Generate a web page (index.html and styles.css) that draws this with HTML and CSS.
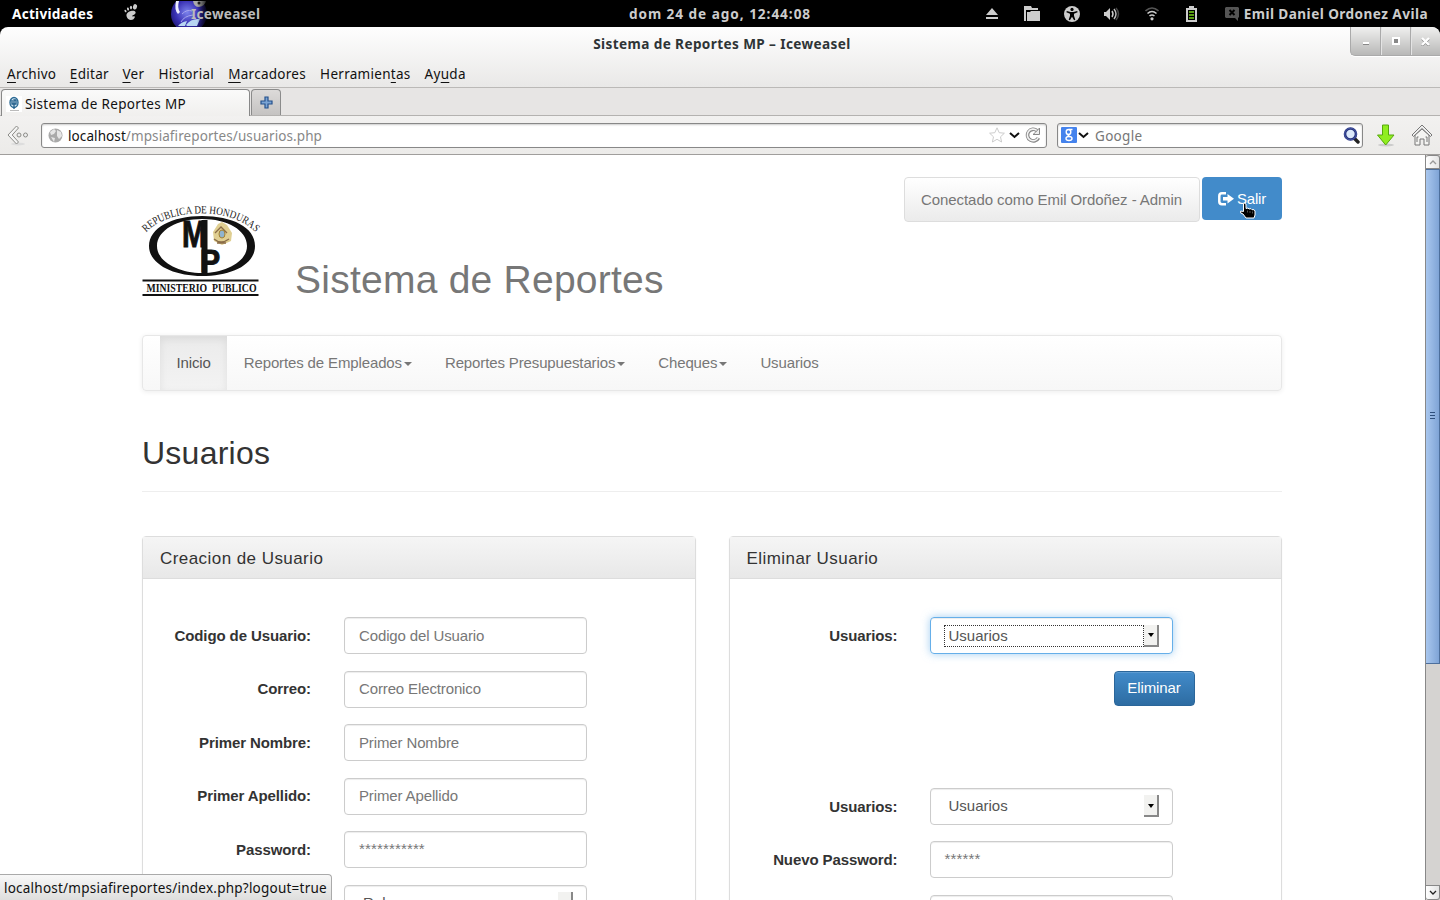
FILE: index.html
```html
<!DOCTYPE html>
<html lang="es">
<head>
<meta charset="utf-8">
<title>Sistema de Reportes MP</title>
<link rel="stylesheet" href="styles.css">
</head>
<body>
<div class="desktop">
  <header class="topbar">
    <span class="activities">Actividades</span>
    <svg class="foot" width="14" height="17" viewBox="0 0 14 17" fill="#ccc"><ellipse cx="11" cy="2.8" rx="2" ry="2.7" transform="rotate(15 11 2.8)"/><ellipse cx="7" cy="3.6" rx="1.1" ry="1.8"/><ellipse cx="4" cy="5" rx="1" ry="1.6" transform="rotate(-15 4 5)"/><ellipse cx="1.5" cy="7" rx=".9" ry="1.4" transform="rotate(-30 1.500 7)"/><path d="M2.500 10.500C3.500 7 10.500 5.500 11.500 8c.8 2.200-2 2.700-3 3.600-.6.800 0 1.200 1 .7 1-.4 1.700.2 1.200 1.300C9.500 16.500 6 16.800 4.200 15c-1.300-1.200-2-3-1.700-4.500z"/></svg>
    <div class="app">
      <svg class="globe" width="38" height="26" viewBox="0 0 38 26"><defs><radialGradient id="gl" cx=".45" cy=".45" r=".6"><stop offset="0" stop-color="#7c83ec"/><stop offset=".55" stop-color="#3931b4"/><stop offset="1" stop-color="#16105f"/></radialGradient><linearGradient id="fade"><stop offset=".5" stop-color="#000" stop-opacity="0"/><stop offset="1" stop-color="#000"/></linearGradient></defs><circle cx="18" cy="13" r="18" fill="url(#gl)"/><path d="M5 0Q3 9 7 13L9 11Q6 7 8 0z" fill="#eef"/><path d="M7 25q3-4 9-5l-2 5zM15 24q5-7 14-6l-3 7H16z" fill="#b8d6f2"/><path d="M11 13q5-5 10-3M10 21q3-6 12-7" stroke="#a6a5ee" fill="none"/><path d="M22 0h13q-1 5-7 6-5 0-6-6z" fill="#aaa"/><circle cx="28" cy="2" r="1.500" fill="#222"/><path d="M14 0h24v26H14z" fill="url(#fade)"/></svg>
      <span>Iceweasel</span>
    </div>
    <span class="clock">dom 24 de ago, 12:44:08</span>
    <div class="tray">
      <svg width="12" height="12" viewBox="0 0 12 12" fill="#ccc"><path d="M6 0l6 7H0zM0 9h12v2H0z"/></svg>
      <svg width="16" height="15" viewBox="0 0 16 15"><path d="M0 0h7l1 2h6v2H2v11H0z" fill="#ccc"/><path d="M3 6h3l1-1h9v10H3z" fill="#ccc"/></svg>
      <svg width="16" height="16" viewBox="0 0 16 16"><circle cx="8" cy="8" r="8" fill="#ccc"/><circle cx="8" cy="3.400" r="1.600"/><path d="M2.800 5l3.700 1h3l3.700-1 .4 1.200L10 7.800v2l1.300 4-1.200.5L8 10.800l-2.100 3.500-1.200-.5 1.300-4v-2L2.400 6.200z"/></svg>
      <svg width="16" height="14" viewBox="0 0 16 14"><path d="M0 5h2l4-4v12L2 9H0z" fill="#ccc"/><path d="M8 4q2 3 0 6" stroke="#ccc" stroke-width="1.500" fill="none"/><path d="M10 2q4 5 0 10" stroke="#bbb" stroke-width="1.500" fill="none"/><path d="M12 1q5 6 0 12" stroke="#444" stroke-width="1.500" fill="none"/></svg>
      <svg width="14" height="14" viewBox="0 0 14 14" fill="none" stroke-width="1.600"><path d="M.5 4q6.500-6 13 0" stroke="#555"/><path d="M2.500 6.500q4.500-4 9 0M4.500 9q2.500-2 5 0" stroke="#ccc"/><circle cx="7" cy="11.800" r="1.600" fill="#ccc"/></svg>
      <svg width="11" height="16" viewBox="0 0 11 16"><path d="M3 0h5v2h3v14H0V2h3z" fill="#ccc"/><path d="M2 4h7v10H2z"/><path d="M3 5h5v2H3zM3 8h5v2H3zM3 11h5v2H3z" fill="#5a9e12"/></svg>
      <svg width="14" height="14" viewBox="0 0 14 14"><path d="M1 0h12l1 1v9l-1 1v3l-3-3H1l-1-1V1z" fill="#555"/><path d="M4.500 3l5 5m0-5l-5 5" stroke="#000" stroke-width="2"/></svg>
      <span class="user">Emil Daniel Ordonez Avila</span>
    </div>
  </header>

  <div class="window">
    <div class="titlebar">
      <span class="title">Sistema de Reportes MP – Iceweasel</span>
      <div class="winbtns">
        <i><svg width="8" height="8"><path d="M1 5h6v2H1z" fill="#fff"/><path d="M1 7h6v1H1z" fill="#888"/></svg></i>
        <i><svg width="8" height="8"><path d="M1 1h6v6H1z" stroke="#fff" stroke-width="2" fill="#888"/></svg></i>
        <i><svg width="9" height="9"><path d="M1 2l7 7M8 2L1 9" stroke="#888" stroke-width="2"/><path d="M1 1l7 7M8 1L1 8" stroke="#fff" stroke-width="2.300"/></svg></i>
      </div>
    </div>
    <nav class="menubar">
      <span><u>A</u>rchivo</span><span><u>E</u>ditar</span><span><u>V</u>er</span><span>Hi<u>s</u>torial</span><span><u>M</u>arcadores</span><span>Herramien<u>t</u>as</span><span>Ay<u>u</u>da</span>
    </nav>
    <div class="tabs">
      <div class="tab">
        <svg width="16" height="16" viewBox="0 0 16 16"><path fill="#fff" d="M0 0h16v16H0z"/><ellipse cx="8" cy="6.500" rx="4" ry="5" fill="#cfe3ee" stroke="#2c6a94" stroke-width="1.400"/><path d="M6 4v4h4V4H8v9" stroke="#235e8a" stroke-width="1.300" fill="none"/><path d="M4 14.500h9" stroke="#bbb"/></svg>
        <span>Sistema de Reportes MP</span>
      </div>
      <div class="newtab"><svg width="13" height="13" viewBox="0 0 13 13"><path d="M5 1h3v4h4v3H8v4H5V8H1V5h4z" fill="#7ba4d4" stroke="#24508c" stroke-width="1.200"/></svg></div>
    </div>
    <div class="toolbar">
      <svg class="back" width="22" height="21" viewBox="0 0 22 21"><ellipse cx="11" cy="19" rx="7" ry="1.500" fill="#ddd"/><path d="M9.500 1L1 10l8.500 9 2-2-6.300-7 6.300-7z" fill="#f5f5f5" stroke="#8c8c88"/><circle cx="12" cy="10" r="2" fill="#eee" stroke="#8c8c88"/><circle cx="18.500" cy="10" r="2" fill="#eee" stroke="#8c8c88"/></svg>
      <div class="url">
        <svg width="15" height="15" viewBox="0 0 15 15"><circle cx="7.500" cy="7.500" r="7" fill="#aaa"/><path d="M2 4l4-3 2 2-2 3-3 1zM9 2l4 2 1 4-3 3-2-3zM3 9l4 1-1 4z" fill="#e6e6e6"/></svg>
        <span class="address">localhost<em>/mpsiafireportes/usuarios.php</em></span>
        <svg class="star" width="16" height="16" viewBox="0 0 16 16"><path d="M8 .8l2.200 4.900 5.200.5-3.900 3.600 1.100 5.200L8 12.300 3.400 15l1.100-5.200L.6 6.200l5.200-.5z" fill="#fff" stroke="#ccc"/></svg>
        <svg class="chev" width="11" height="7"><path d="M1 1l4.500 4L10 1" stroke="#111" stroke-width="2" fill="none"/></svg>
        <svg width="16" height="16" viewBox="0 0 16 16" fill="none"><path d="M12 3.600A5.800 5.800 0 1 0 13.500 10.800" stroke="#888" stroke-width="3.600"/><path d="M12 3.600A5.800 5.800 0 1 0 13.300 10.500" stroke="#f4f4f4" stroke-width="1.600"/><path d="M14.500 1v6.500H8l2.500-2.200z" fill="#eee" stroke="#888"/></svg>
      </div>
      <div class="search">
        <svg width="16" height="16" viewBox="0 0 16 16"><rect width="16" height="16" rx="1" fill="#4583ed"/><g fill="none" stroke="#fff" stroke-width="1.400"><ellipse cx="7.500" cy="5" rx="2.300" ry="2.500"/><path d="M8 2.500h3.500M8 7.500q-2 1 .5 2"/><ellipse cx="8" cy="11.500" rx="3" ry="2"/></g></svg>
        <svg class="chev" width="11" height="7"><path d="M1 1l4.500 4L10 1" stroke="#111" stroke-width="2" fill="none"/></svg>
        <span>Google</span>
        <svg width="17" height="17" viewBox="0 0 17 17"><path d="M11 11l4 4" stroke="#222" stroke-width="3.400" stroke-linecap="round"/><circle cx="7.500" cy="7" r="5.500" fill="#dce9fb" stroke="#26337e" stroke-width="2.600"/><circle cx="7.500" cy="7" r="5.800" fill="none" stroke="#5868b4" stroke-width=".7"/></svg>
      </div>
      <svg class="down" width="20" height="23" viewBox="0 0 20 23"><ellipse cx="10" cy="21" rx="8" ry="1.500" fill="#ccc"/><path d="M6.500 1h6v10h5.500l-8.300 10L1.500 11h5z" fill="#90ee20" stroke="#57a80c"/></svg>
      <svg class="home" width="22" height="22" viewBox="0 0 22 22"><path d="M4 11v10h5v-6h4v6h5V11l-7-6z" fill="#f4f4f2" stroke="#777"/><path d="M11 1L1 11l1.500 1.500L11 4.500l8.500 8L21 11z" fill="#eee" stroke="#777"/><path d="M6 18v-5h1.500m7 0H16v5" stroke="#777" fill="none"/></svg>
    </div>

    <div class="viewport">
      <main class="page">
        <div class="container">
          <div class="masthead">
            <svg class="logo" width="118" height="94" viewBox="0 0 118 94">
              <defs><path id="arc" d="M4 28.500C28 3 90 3 113 28"/></defs>
              <text class="logo-arc"><textPath href="#arc" textLength="119" lengthAdjust="spacingAndGlyphs">REPUBLICA DE HONDURAS</textPath></text>
              <path fill-rule="evenodd" d="M60 12C90 12 113 23 113 42S89 72 60 72 7 60 7 42 30 12 60 12zM60 15C36 15 15 26 15 42S37 69 60 69 105 58 105 42 85 15 60 15z" fill="#111"/>
              <text class="logo-mp" transform="translate(40 42.500) scale(.72 1)" textLength="34" lengthAdjust="spacingAndGlyphs">M</text>
              <path d="M59.500 16h6v55h-6z" fill="#111"/>
              <text class="logo-mp p" transform="translate(58 68) scale(.72 1)" textLength="28" lengthAdjust="spacingAndGlyphs">P</text>
              <path d="M71 28l5-8 4-2 5 3 5 8-1 8-9 4-8-4z" fill="#e0cf92"/><path d="M72 35q7 6 15 0M73 29l6-6 6 6M75 39h9" stroke="#8a6c48" stroke-width="1.300" fill="none"/><ellipse cx="80" cy="30" rx="3" ry="4" fill="#8fb4cf" stroke="#a6812e"/>
              <path d="M.5 76.500h116M.5 91h116" stroke="#111" stroke-width="1.800"/>
              <text class="logo-base" x="4.500" y="88" textLength="110" lengthAdjust="spacingAndGlyphs">MINISTERIO&#160; PUBLICO</text>
            </svg>
            <h1>Sistema de Reportes</h1>
            <div class="session">
              <div class="who">Conectado como Emil Ordoñez - Admin</div>
              <a class="exit"><svg width="16" height="14" viewBox="0 0 16 14"><path d="M8 1.300H4Q1.300 1.300 1.300 4v5.500Q1.300 12.200 4 12.200h4" fill="none" stroke="#fff" stroke-width="2.500"/><path d="M9.500 2L16 6.800 9.500 11.500V8.500H5V5h4.500z" fill="#fff"/></svg>Salir
                <svg class="pointer" width="17" height="17" viewBox="0 0 17 17"><path d="M3.500 2Q4.500.5 6 2v4.500L8 6l1 1 2-.3 1 1h2l1 1.300v4L14 16H6l-3-4-2.300-1V9L3.500 9.500z" stroke="#fff"/><path d="M7.500 8.500v2M10 9v2M12.500 9.500v2" stroke="#777" stroke-width=".7"/></svg>
              </a>
            </div>
          </div>
          <nav class="navbar"><a class="active">Inicio</a><a>Reportes de Empleados<b></b></a><a>Reportes Presupuestarios<b></b></a><a>Cheques<b></b></a><a>Usuarios</a></nav>
          <h2>Usuarios</h2>
          <div class="columns">
            <section class="panel">
              <h3>Creacion de Usuario</h3>
              <div class="form">
                <div class="row"><label>Codigo de Usuario:</label><div class="field">Codigo del Usuario</div></div>
                <div class="row"><label>Correo:</label><div class="field">Correo Electronico</div></div>
                <div class="row"><label>Primer Nombre:</label><div class="field">Primer Nombre</div></div>
                <div class="row"><label>Primer Apellido:</label><div class="field">Primer Apellido</div></div>
                <div class="row"><label>Password:</label><div class="field stars">***********</div></div>
                <div class="row"><label></label><div class="field select"><span>Rol</span><i></i></div></div>
              </div>
            </section>
            <section class="panel right">
              <h3>Eliminar Usuario</h3>
              <div class="form">
                <div class="row"><label>Usuarios:</label><div class="field select focus"><span>Usuarios</span><i></i></div></div>
                <div class="actions"><button>Eliminar</button></div>
                <div class="row"><label>Usuarios:</label><div class="field select"><span>Usuarios</span><i></i></div></div>
                <div class="row"><label>Nuevo Password:</label><div class="field stars">******</div></div>
                <div class="row"><label></label><div class="field"></div></div>
              </div>
            </section>
          </div>
        </div>
      </main>
      <div class="scrollbar">
        <div class="sbtn"><svg width="8" height="5"><path d="M1 4l3-3 3 3" stroke="#999" fill="none" stroke-width="1.300"/></svg></div>
        <div class="thumb"><i></i><i></i><i></i></div>
        <div class="track"></div>
        <div class="sbtn last"><svg width="8" height="5"><path d="M1 1l3 3 3-3" stroke="#222" fill="none" stroke-width="1.300"/></svg></div>
      </div>
      <div class="status">localhost/mpsiafireportes/index.php?logout=true</div>
    </div>
  </div>
</div>
</body>
</html>
```
FILE: styles.css
```css
* { box-sizing: border-box; }
body { margin: 0; background: #000; }
svg { display: block; flex: none; }
.desktop { width: 1440px; height: 900px; overflow: hidden; display: flex; flex-direction: column; background: #000; font: 13.5px "Noto Sans", sans-serif; color: #111; white-space: nowrap; }

.topbar { position: relative; height: 27px; flex: none; display: flex; align-items: center; padding: 0 12px; font-size: 13.6px; font-weight: bold; color: #ccc; letter-spacing: .25px; }
.activities { color: #fff; width: 112px; }
.foot { margin-top: -2px; }
.app { display: flex; align-items: center; height: 26px; margin-left: 33px; }
.globe { margin-right: -18px; align-self: flex-start; }
.app span { position: relative; color: #bbb; }
.clock { position: absolute; left: 0; width: 1440px; text-align: center; letter-spacing: .96px; }
.tray { margin-left: auto; display: grid; grid-template-columns: repeat(7, 40px) auto; align-items: center; justify-items: center; }
.tray .user { margin-left: -8px; letter-spacing: .44px; }

.window { flex: 1; min-height: 0; display: flex; flex-direction: column; border-radius: 8px 8px 0 0; overflow: hidden; background: linear-gradient(#fefefe, #e9e8e7 60px); }
.titlebar { position: relative; height: 34px; flex: none; display: flex; justify-content: center; padding-left: 4px; font-weight: bold; font-size: 13.6px; line-height: 34px; color: #2e3436; letter-spacing: .39px; }
.winbtns { position: absolute; right: 0; top: 0; width: 90px; height: 29px; display: flex; background: linear-gradient(#f0f0ef, #b8b8b7); border: 1px solid #aaa; border-width: 0 0 1px 1px; border-radius: 0 8px 0 5px; box-shadow: 0 1px #fff; }
.winbtns i { flex: 1; display: flex; align-items: center; justify-content: center; }
.winbtns i + i { border-left: 1px solid #aaa; box-shadow: inset 1px 0 #e4e4e4; }
.menubar { height: 26px; flex: none; display: flex; align-items: center; gap: 13.6px; padding-left: 7px; letter-spacing: .28px; }
.menubar span:nth-child(n+4) { margin-left: .5px; }
.menubar u { text-underline-offset: 3px; }
.tabs { height: 29px; flex: none; display: flex; padding-left: 1px; border-top: 1px solid #bbb9b7; border-bottom: 1px solid #b4b2b0; background: #e7e5e4; }
.tab { width: 249px; height: 28px; margin-top: 1px; display: flex; align-items: center; gap: 3px; padding-left: 4px; border: 1px solid #888; border-bottom: 0; border-radius: 4px 4px 0 0; background: linear-gradient(#fafafa, #f0efed); letter-spacing: .32px; }
.newtab { width: 30px; margin: 1px 0 0 1px; display: flex; align-items: center; justify-content: center; border: 1px solid #8b8b8b; border-bottom: 0; border-radius: 4px 4px 0 0; background: linear-gradient(#dcdad9, #c5c3c2); }
.toolbar { height: 39px; flex: none; display: flex; align-items: center; padding-left: 7px; background: linear-gradient(#f2f1f0, #ecebe9); border-bottom: 1px solid #a09e9c; }
.url, .search { height: 25px; display: flex; align-items: center; background: #fff; border: 1px solid #888; border-radius: 3px; box-shadow: inset 0 1px 2px #ccc; }
.url { width: 1006px; margin-left: 12px; padding: 0 5px 0 6px; }
.address { margin: 0 auto 0 5px; padding-top: 2px; letter-spacing: .09px; }
.address em { font-style: normal; color: #888; }
.url .chev { margin: 0 5px 0 4px; }
.search { width: 306px; margin-left: 10px; padding: 0 2px 0 3px; }
.search .chev { margin: 0 6px 0 1px; }
.search span { margin-right: auto; padding-top: 2px; color: #777; letter-spacing: .3px; }
.down { margin-left: 13px; }
.home { margin-left: 15px; }

.viewport { flex: 1; min-height: 0; position: relative; display: flex; background: #fff; overflow: hidden; }
.page { width: 1425px; overflow: hidden; font: 15px "Liberation Sans", Arial, sans-serif; color: #333; }
.container { width: 1140px; margin-left: 142px; }
.masthead { height: 180px; display: flex; align-items: flex-start; }
.logo { margin: 49px 0 0 0; overflow: visible; }
.logo-arc { font: 11px "Liberation Serif", serif; fill: #222; }
.logo-mp { font: bold 37px "Liberation Sans", sans-serif; fill: #111; stroke: #111; stroke-width: 1; }
.logo-mp.p { font-size: 31px; }
.logo-base { font: bold 12.5px "Liberation Serif", serif; fill: #111; }
h1 { margin: 103px 0 0 35px; font-size: 39px; line-height: 44px; font-weight: normal; color: #777; letter-spacing: .24px; }
.session { margin: 22px 0 0 auto; display: flex; gap: 2px; align-items: flex-start; }
.who { width: 296px; height: 45px; line-height: 43px; padding-left: 16px; color: #777; background: linear-gradient(#fff, #ebebeb); border: 1px solid #ddd; border-radius: 4px; letter-spacing: -.07px; }
.exit { position: relative; width: 80px; height: 43px; display: flex; align-items: center; gap: 3px; padding-left: 16px; color: #fff; background: #428bca; border-radius: 4px; letter-spacing: -.2px; }
.pointer { position: absolute; left: 38px; top: 25px; }
.navbar { height: 56px; display: flex; padding-left: 17px; border: 1px solid #e7e7e7; border-radius: 4px; background: linear-gradient(#fff, #f7f7f7); box-shadow: 0 1px 5px rgba(0,0,0,.075); color: #777; }
.navbar a { height: 54px; display: flex; align-items: center; padding: 0 16.5px 1px; letter-spacing: -.13px; }
.navbar .active { color: #555; background: linear-gradient(#ebebeb, #f3f3f3); box-shadow: inset 0 3px 9px rgba(0,0,0,.075); }
.navbar b { margin: 3px 0 0 2px; border: 4px solid transparent; border-top-color: #777; border-bottom: 0; }
h2 { margin: 0; padding: 44px 0 0; height: 101px; border-bottom: 1px solid #eee; font-size: 32px; line-height: 36px; font-weight: normal; letter-spacing: .25px; }
.columns { display: flex; gap: 33px; margin-top: 44px; }
.panel { flex: 1; height: 420px; border: 1px solid #ddd; border-radius: 4px; box-shadow: 0 1px 2px rgba(0,0,0,.05); }
h3 { margin: 0; height: 42px; line-height: 43px; padding-left: 17px; background: linear-gradient(#f5f5f5, #e8e8e8); border-bottom: 1px solid #ddd; font-size: 17px; font-weight: normal; letter-spacing: .44px; }
.form { padding-top: 38px; display: flex; flex-direction: column; gap: 16.5px; }
.row { display: flex; align-items: center; height: 37px; gap: 33px; }
.row label { width: 168px; padding-bottom: .4px; text-align: right; font-weight: bold; letter-spacing: -.1px; }
.right .row { gap: 32px; }
.field { width: 243px; height: 37px; padding: 0 14px; line-height: 35px; border: 1px solid #ccc; border-radius: 4px; color: #777; box-shadow: inset 0 1px 1px rgba(0,0,0,.075); letter-spacing: -.13px; }
.row:nth-child(even) .field { line-height: 34.4px; }
.row .stars { line-height: 34px; letter-spacing: .15px; }
.select { display: flex; align-items: center; padding: 0 13px; color: #555; }
.select span { flex: 1; height: 22px; line-height: 20px; padding-left: 4px; border: 1px solid transparent; letter-spacing: 0; }
.select i { width: 15px; height: 22px; background: #f2f2f0; border: solid #888; border-width: 0 2px 2px 0; display: flex; align-items: center; justify-content: center; }
.select i::before { content: ""; margin: 1px 0 0 2px; border: 3.5px solid transparent; border-top: 4px solid #000; border-bottom: 0; }
.focus { border-color: #66afe9; box-shadow: inset 0 1px 1px rgba(0,0,0,.075), 0 0 8px rgba(102,175,233,.6); }
.focus span { border: 1px dotted #333; }
.actions { height: 100.8px; padding-left: 384px; }
button { width: 81px; height: 35px; padding: 0 0 2px; color: #fff; font: 15px "Liberation Sans", Arial, sans-serif; letter-spacing: -.08px; background: linear-gradient(#428bca, #2d6ca2); border: 1px solid #2b669a; border-radius: 4px; box-shadow: inset 0 1px rgba(255,255,255,.15); }

.scrollbar { width: 15px; display: flex; flex-direction: column; border-left: 1px solid #888; background: #d5d3d1; }
.sbtn { height: 14px; flex: none; display: flex; align-items: center; justify-content: center; background: linear-gradient(90deg, #fff, #e4e4e4); border: 1px solid #888; border-left: 0; border-radius: 3px 3px 0 0; }
.last { height: 15px; border-radius: 0 0 3px 3px; }
.thumb { height: 495px; flex: none; display: flex; flex-direction: column; align-items: center; justify-content: center; gap: 2px; padding-bottom: 2px; background: linear-gradient(90deg, #a9c7ee, #7fa4d6); border: 1px solid #4d6f9c; border-left: 0; }
.thumb i { width: 5px; height: 1px; background: #2f4f7c; }
.track { flex: 1; }
.status { position: absolute; left: 0; bottom: 0; width: 332px; height: 26px; line-height: 26px; padding-left: 4px; font-size: 13.5px; letter-spacing: .23px; border: 1px solid #aaa; border-width: 1px 1px 0 0; border-radius: 0 4px 0 0; background: linear-gradient(#f8f8f8, #dededd); }
```
